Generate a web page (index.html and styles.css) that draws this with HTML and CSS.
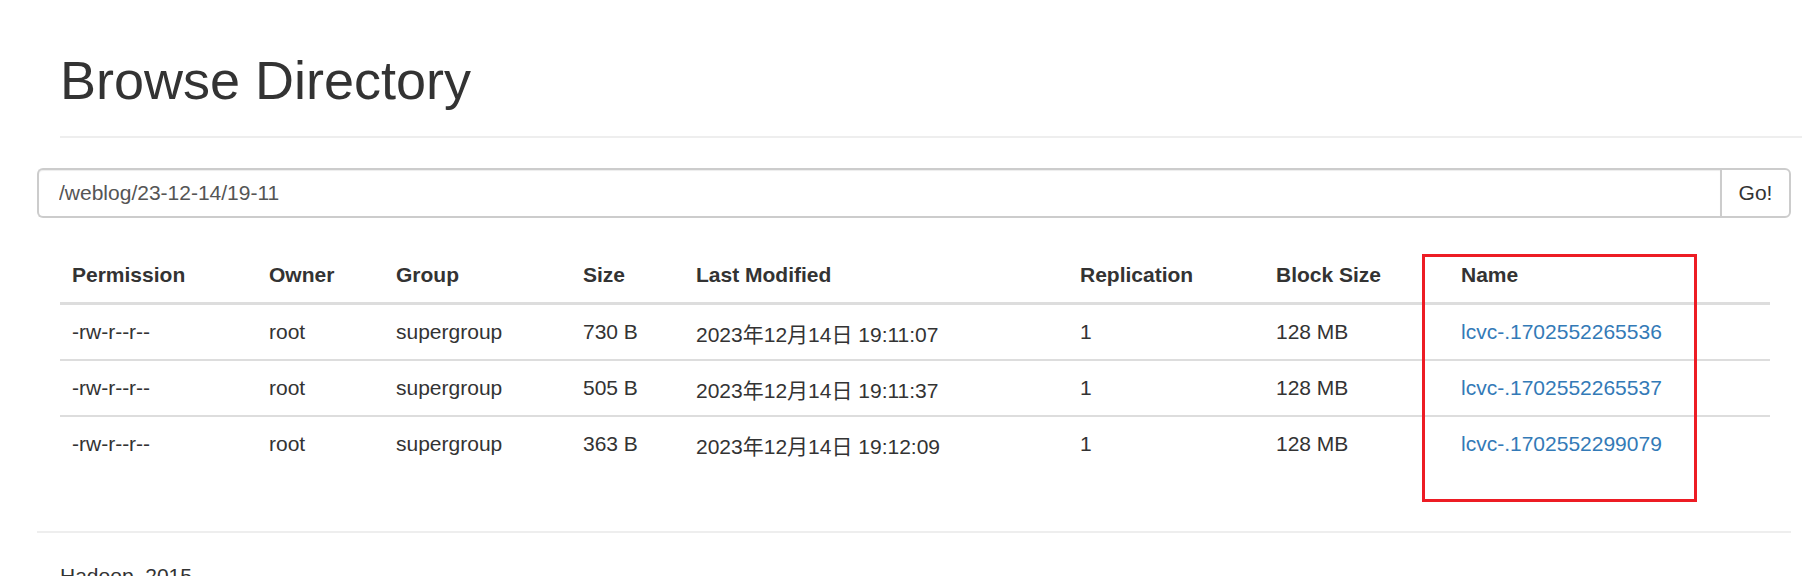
FILE: index.html
```html
<!DOCTYPE html>
<html lang="en">
<head>
<meta charset="utf-8">
<title>Browse Directory</title>
<link rel="stylesheet" href="styles.css">
</head>
<body>
<div class="page">
  <div class="page-header">
    <h1>Browse Directory</h1>
  </div>

  <form class="path-form">
    <div class="input-group">
      <input class="path-input" type="text" value="/weblog/23-12-14/19-11">
      <button class="go-btn" type="button">Go!</button>
    </div>
  </form>

  <div class="table-wrap">
    <table class="listing">
      <colgroup>
        <col class="c-perm"><col class="c-owner"><col class="c-group"><col class="c-size">
        <col class="c-mod"><col class="c-rep"><col class="c-block"><col class="c-name">
      </colgroup>
      <thead>
        <tr>
          <th>Permission</th><th>Owner</th><th>Group</th><th>Size</th>
          <th>Last Modified</th><th>Replication</th><th>Block Size</th><th>Name</th>
        </tr>
      </thead>
      <tbody>
        <tr>
          <td>-rw-r--r--</td><td>root</td><td>supergroup</td><td>730 B</td>
          <td class="date">2023年12月14日 19:11:07</td><td>1</td><td>128 MB</td>
          <td><a href="#">lcvc-.1702552265536</a></td>
        </tr>
        <tr>
          <td>-rw-r--r--</td><td>root</td><td>supergroup</td><td>505 B</td>
          <td class="date">2023年12月14日 19:11:37</td><td>1</td><td>128 MB</td>
          <td><a href="#">lcvc-.1702552265537</a></td>
        </tr>
        <tr>
          <td>-rw-r--r--</td><td>root</td><td>supergroup</td><td>363 B</td>
          <td class="date">2023年12月14日 19:12:09</td><td>1</td><td>128 MB</td>
          <td><a href="#">lcvc-.1702552299079</a></td>
        </tr>
      </tbody>
    </table>
    <div class="highlight-box"></div>
  </div>

  <hr class="footer-rule">
  <p class="footer-text">Hadoop, 2015.</p>
</div>
</body>
</html>
```

FILE: styles.css
```css
* { box-sizing: border-box; }

html, body {
  margin: 0;
  padding: 0;
  background: #fff;
}

body {
  font-family: "Liberation Sans", Arial, "Noto Sans CJK SC", sans-serif;
  font-size: 21px;
  line-height: 30px;
  color: #333;
  overflow: hidden;
}

.page {
  padding: 0 11px 0 37px;
}

.page-header {
  margin: 0 -11px 0 23px;
  padding: 51px 0 26px;
  border-bottom: 2px solid #eee;
}

.page-header h1 {
  margin: 0;
  font-size: 54px;
  line-height: 59px;
  font-weight: 500;
  color: #333;
}

.path-form {
  margin: 30px 0 0;
}

.input-group {
  display: flex;
  height: 50px;
}

.path-input {
  flex: 1;
  min-width: 0;
  height: 50px;
  margin: 0;
  padding: 0 20px;
  border: 2px solid #ccc;
  border-right: none;
  border-radius: 6px 0 0 6px;
  box-shadow: inset 0 1px 1px rgba(0, 0, 0, 0.075);
  font-family: inherit;
  font-size: 21px;
  color: #555;
  background: #fff;
  outline: none;
}

.go-btn {
  width: 71px;
  height: 50px;
  margin: 0;
  padding: 0;
  border: 2px solid #ccc;
  border-radius: 0 6px 6px 0;
  background: #fff;
  font-family: inherit;
  font-size: 21px;
  color: #333;
}

.table-wrap {
  position: relative;
  margin: 30px 21px 0 23px;
}

.listing {
  width: 100%;
  table-layout: fixed;
  border-collapse: collapse;
  border-spacing: 0;
}

.c-perm { width: 197px; }
.c-owner { width: 127px; }
.c-group { width: 187px; }
.c-size { width: 113px; }
.c-mod { width: 384px; }
.c-rep { width: 196px; }
.c-block { width: 185px; }
.c-name { width: 321px; }

.listing th,
.listing td {
  padding: 12px;
  text-align: left;
  vertical-align: top;
  line-height: 30px;
  white-space: nowrap;
}

.listing th {
  font-weight: bold;
  border-bottom: 3px solid #ddd;
}

.listing td {
  border-top: 2px solid #ddd;
}

.listing tbody tr:first-child td {
  border-top: none;
}

.listing td.date {
  padding-top: 15px;
  padding-bottom: 9px;
}

.listing a {
  color: #337ab7;
  text-decoration: none;
}

.highlight-box {
  position: absolute;
  left: 1362px;
  top: 6px;
  width: 275px;
  height: 248px;
  border: 3px solid #ed1c24;
  pointer-events: none;
}

.footer-rule {
  margin: 60px 0 0;
  border: 0;
  border-top: 2px solid #eee;
  height: 0;
}

.footer-text {
  margin: 28px 0 0 23px;
}
```
